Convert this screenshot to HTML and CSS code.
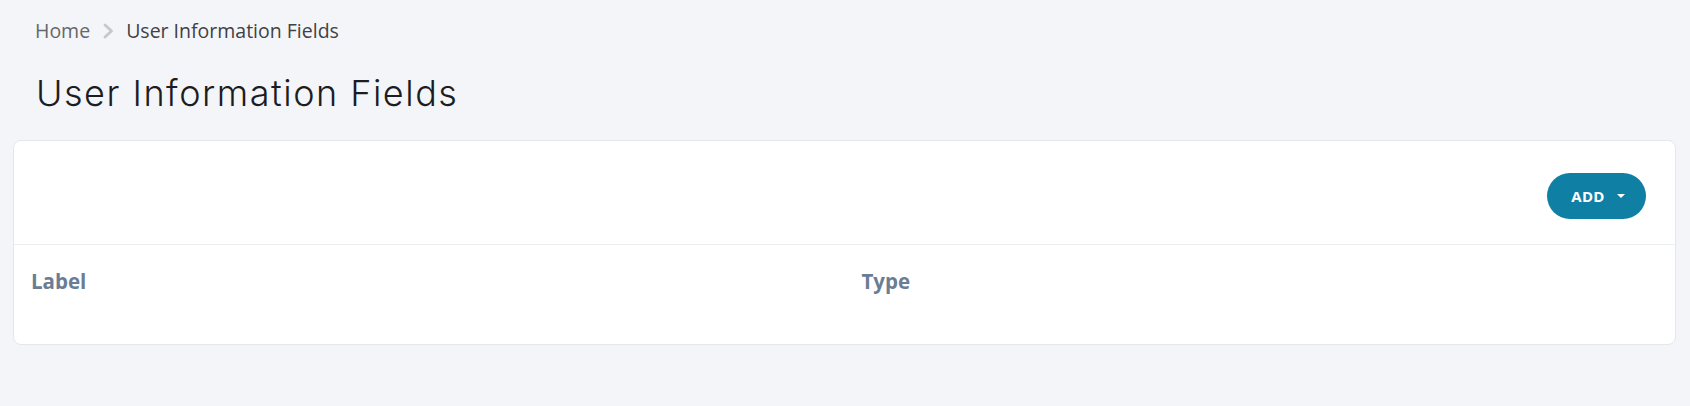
FILE: index.html
```html
<!DOCTYPE html>
<html lang="en">
<head>
  <meta charset="UTF-8" />
  <meta name="viewport" content="width=device-width, initial-scale=1.0"/>
  <title>User Information Fields</title>
  <link rel="stylesheet" href="styles.css">
</head>
<body>
  <div class="page">
    <nav class="breadcrumb">
      <a class="crumb-link" href="#">Home</a>
      <svg class="crumb-sep" viewBox="0 0 12 16" width="12" height="16">
        <path d="M3 2 L9.5 8 L3 14" fill="none" stroke="#c6c8cb" stroke-width="2.8" stroke-linecap="round" stroke-linejoin="round"/>
      </svg>
      <span class="crumb-current">User Information Fields</span>
    </nav>

    <h1 class="page-title">User Information Fields</h1>

    <div class="card">
      <div class="card-head">
        <button class="btn-add">ADD <span class="caret"></span></button>
      </div>
      <div class="table">
        <div class="th">Label</div>
        <div class="th">Type</div>
      </div>
    </div>
  </div>
</body>
</html>
```

FILE: styles.css
```css
body {
  margin: 0;
  background: #f4f5f8;
  font-family: 'Open Sans', 'Noto Sans', sans-serif;
  color: #333;
}
.page {
  padding: 0 14px 0 13px;
}
.breadcrumb {
  display: flex;
  align-items: center;
  gap: 12px;
  padding: 18px 0 0 22px;
  font-size: 19.5px;
  line-height: 26px;
}
.crumb-link {
  color: #65686c;
  text-decoration: none;
}
.crumb-current {
  color: #3f4145;
}
.page-title {
  margin: 27px 0 0 23px;
  font-family: 'Inter', sans-serif;
  font-weight: 300;
  font-size: 36px;
  line-height: 44px;
  letter-spacing: 1.5px;
  color: #1c1d22;
}
.card {
  margin-top: 25px;
  background: #fff;
  border: 1px solid #e5e7ea;
  border-radius: 8px;
}
.card-head {
  display: flex;
  justify-content: flex-end;
  padding: 32px 29px 25px 0;
  border-bottom: 1px solid #eceef0;
}
.btn-add {
  display: flex;
  align-items: center;
  justify-content: center;
  gap: 12px;
  width: 99px;
  height: 46px;
  padding: 0 0 0 3px;
  border: none;
  border-radius: 23px;
  background: #0f7fa4;
  color: #fff;
  font-family: 'Open Sans', sans-serif;
  font-weight: 700;
  font-size: 15px;
  letter-spacing: 0.3px;
  cursor: pointer;
}
.caret {
  width: 0;
  height: 0;
  border-left: 4px solid transparent;
  border-right: 4px solid transparent;
  border-top: 4px solid #fff;
}
.table {
  display: grid;
  grid-template-columns: 1fr 1fr;
  padding-bottom: 27px;
}
.th {
  padding: 0 17px;
  height: 72px;
  display: flex;
  align-items: center;
  font-weight: 700;
  font-size: 20.5px;
  color: #6a7d95;
}
```
